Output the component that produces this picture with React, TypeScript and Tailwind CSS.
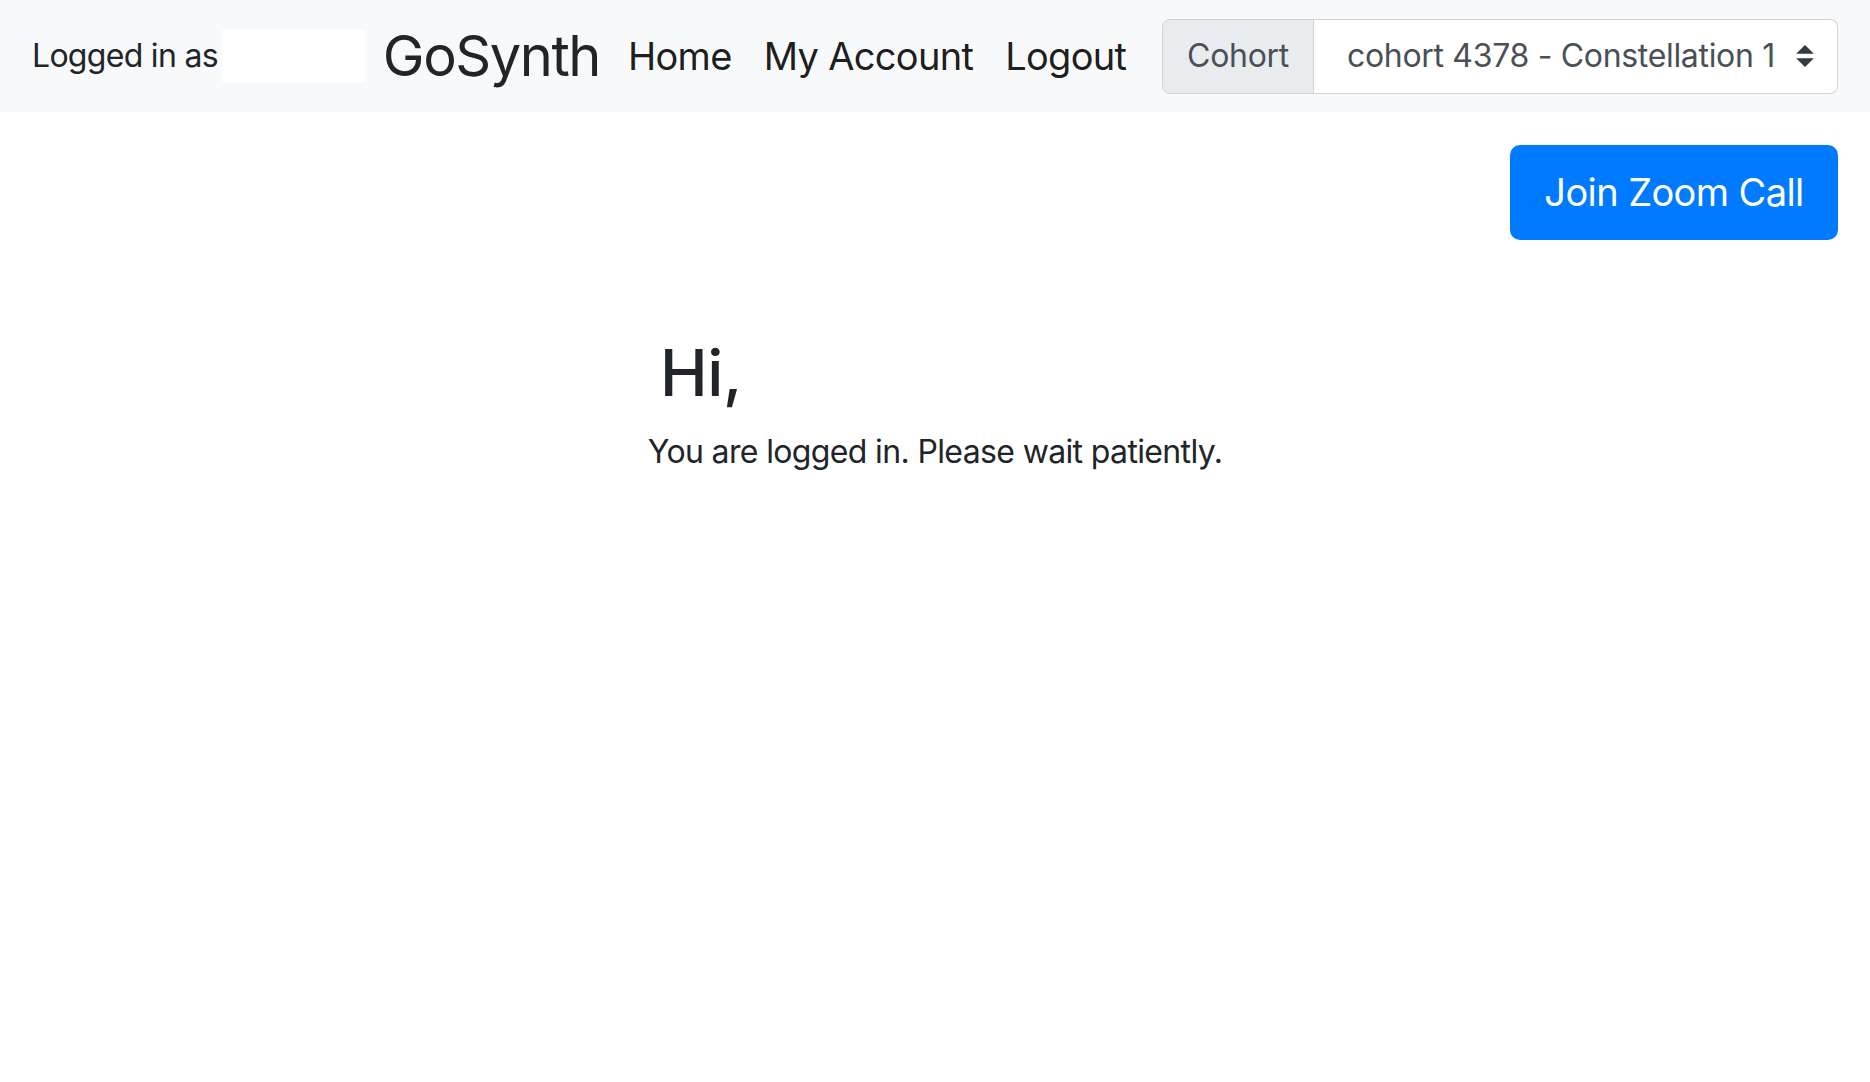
import React from 'react';

const navLinks = ['Home', 'My Account', 'Logout'];

export default function App() {
  return (
    <div className="min-h-screen bg-white text-[#212529] tracking-[-0.02em] whitespace-nowrap font-['Inter','Liberation_Sans',sans-serif]">
      <nav className="h-[112px] bg-[#f8f9fa] flex items-center px-8">
        <span className="text-[32px] leading-none tracking-[-0.022em]">Logged in as</span>
        <span className="ml-[4px] w-[144px] h-[52px] shrink-0 bg-white" />
        <a href="#" className="ml-[17px] text-[56px] leading-none tracking-[-0.026em] text-[#212529]">
          GoSynth
        </a>
        <ul className="flex items-center ml-[12px]">
          {navLinks.map((link) => (
            <li key={link}>
              <a href="#" className="px-4 text-[38px] leading-none tracking-[-0.018em] text-black/90">
                {link}
              </a>
            </li>
          ))}
        </ul>
        <div className="ml-auto flex shrink-0 h-[75px] w-[676px]">
          <span className="w-[152px] flex items-center justify-center bg-[#e9ecef] border border-[#ced4da] rounded-l-[8px] text-[32px] text-[#495057]">
            Cohort
          </span>
          <div className="flex-1 flex items-center justify-between bg-white border border-l-0 border-[#ced4da] rounded-r-[8px] pl-[33px] pr-[23px] text-[32px] text-[#495057]">
            <span>cohort 4378 - Constellation 1</span>
            <svg width="18" height="22" viewBox="0 0 4 5" className="fill-[#343a40]">
              <path d="M2 0L0 2h4zm0 5L0 3h4z" />
            </svg>
          </div>
        </div>
      </nav>

      <main>
        <div className="flex justify-end px-8 pt-[33px]">
          <button className="h-[95px] w-[328px] flex items-center justify-center rounded-[10px] bg-[#007bff] text-white text-[38px] tracking-[-0.016em]">
            Join Zoom Call
          </button>
        </div>

        <div className="flex flex-col items-center mt-[95px]">
          <h2 className="text-[64px] leading-[1.2] font-medium">
            Hi,<span className="inline-block w-[468px]" />
          </h2>
          <p className="mt-[16px] text-[32px] leading-[1.5] tracking-[-0.02em]">
            You are logged in. Please wait patiently.
          </p>
        </div>
      </main>
    </div>
  );
}
